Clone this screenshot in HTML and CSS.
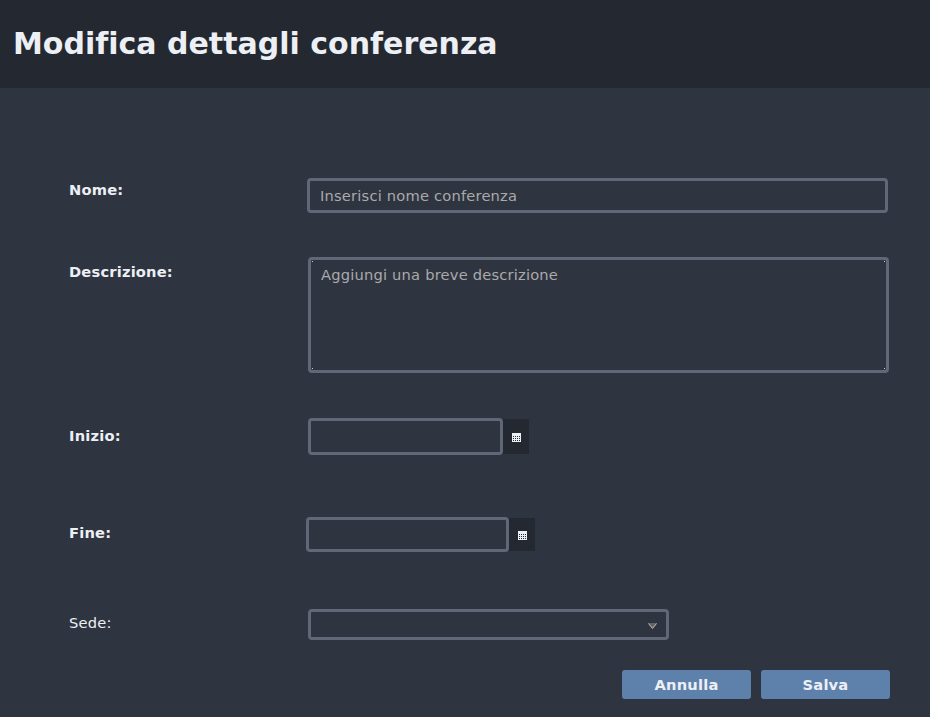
FILE: index.html
```html
<!DOCTYPE html>
<html lang="it">
<head>
<meta charset="utf-8">
<title>Modifica dettagli conferenza</title>
<link rel="stylesheet" href="styles.css">
</head>
<body>
<header class="header"><h1>Modifica dettagli conferenza</h1></header>
<form class="form">
  <div class="row name"><label for="name">Nome:</label><input class="field" id="name" placeholder="Inserisci nome conferenza"></div>
  <div class="row description"><label for="description">Descrizione:</label><div class="field area"><textarea id="description" placeholder="Aggiungi una breve descrizione"></textarea></div></div>
  <div class="row start"><label for="start">Inizio:</label><div class="date"><input class="field" id="start"><button type="button" aria-label="Scegli data di inizio"><svg viewBox="0 0 9 9" shape-rendering="crispEdges"><path fill="#eceff4" d="M0 0h9v9H0z"/><path stroke="#242830" stroke-dasharray="1 1" d="M1 3.5h7M1 5.5h7M1 7.5h7"/></svg></button></div></div>
  <div class="row end"><label for="end">Fine:</label><div class="date"><input class="field" id="end"><button type="button" aria-label="Scegli data di fine"><svg viewBox="0 0 9 9" shape-rendering="crispEdges"><path fill="#eceff4" d="M0 0h9v9H0z"/><path stroke="#242830" stroke-dasharray="1 1" d="M1 3.5h7M1 5.5h7M1 7.5h7"/></svg></button></div></div>
  <div class="row venue"><label>Sede:</label><div class="field select"><svg viewBox="0 0 9 6"><path d="M0 0h9L4.5 6z" fill="#65635f"/><path d="M.5.5l4 5 4-5" fill="none" stroke="#bbb9b0"/></svg></div></div>
  <div class="actions"><button type="button">Annulla</button><button type="submit">Salva</button></div>
</form>
</body>
</html>
```
FILE: styles.css
```css
* { box-sizing: border-box; }
body { margin: 0; height: 717px; overflow: hidden; background: #2e3440; color: #eceff4; font: 14.667px "DejaVu Sans", sans-serif; font-variant-ligatures: none; }
.header { height: 88px; padding: 26px 13px; background: #242830; }
h1 { margin: 0; font-size: 30px; line-height: 36px; }
.form { padding-top: 90px; }
.row { display: flex; align-items: flex-start; padding-left: 69px; }
label { width: 239px; line-height: 18px; font-weight: bold; letter-spacing: .19px; flex: none; }
.field { display: block; border: 3px solid #616777; border-radius: 4px; background: #2e3440; color: #eceff4; font: 14.667px "DejaVu Sans", sans-serif; letter-spacing: .2px; padding: 0 10px; outline: none; }
::placeholder { color: #aaa; opacity: 1; }
.name { height: 79px; }
.name label { width: 238px; padding-top: 3px; }
.name .field { width: 581px; height: 35px; }
.description { height: 161px; }
.description label { padding-top: 6px; }
.area {
  width: 581px;
  height: 116px;
  background:
    linear-gradient(#c8cbd0, #c8cbd0) 1px 1px / 1px 1px no-repeat,
    linear-gradient(#c8cbd0, #c8cbd0) calc(100% - 1px) 1px / 1px 1px no-repeat,
    linear-gradient(#c8cbd0, #c8cbd0) 1px calc(100% - 1px) / 1px 1px no-repeat,
    linear-gradient(#c8cbd0, #c8cbd0) calc(100% - 1px) calc(100% - 1px) / 1px 1px no-repeat;
}
textarea { display: block; width: 100%; height: 100%; border: 0; padding: 6px 0; resize: none; background: transparent; font: inherit; line-height: 18px; letter-spacing: inherit; color: inherit; outline: none; }
.start { height: 99px; }
.start label { padding-top: 9px; }
.start .field { width: 195px; height: 37px; }
.date { display: flex; }
.date button { width: 26px; height: 35px; margin-top: 1px; border: 0; padding: 2px 0 0; background: #242830; }
.date svg { display: block; width: 9px; height: 9px; margin: 0 0 0 9px; }
.end { height: 92px; }
.end label { width: 237px; padding-top: 7px; }
.end .field { width: 203px; height: 35px; }
.end button { height: 33px; }
.venue { height: 61px; }
.venue label { padding-top: 5px; font-weight: normal; }
.select { width: 361px; height: 31px; display: flex; align-items: center; justify-content: flex-end; padding-right: 9px; }
.select svg { width: 9px; height: 6px; margin-top: 3px; }
.actions { display: flex; justify-content: flex-end; gap: 10px; padding-right: 40px; }
.actions button { width: 129px; height: 29px; border: 0; border-radius: 3px; padding: 0; background: #5e81ac; color: #eceff4; font: bold 14.667px "DejaVu Sans", sans-serif; letter-spacing: .2px; }
```
